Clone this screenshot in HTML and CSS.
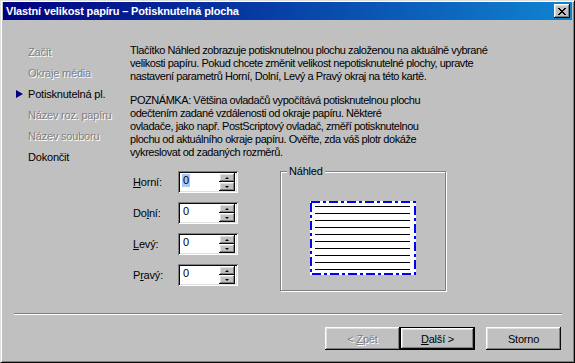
FILE: index.html
```html
<!DOCTYPE html>
<html lang="cs">

<head>
    <meta charset="UTF-8">
    <meta name="viewport" content="width=device-width, initial-scale=1.0">
    <title>Vlastní velikost papíru</title>

    <link rel="stylesheet" href="styles.css">
</head>

<body>
    <div class="window">
        <div class="titlebar">
            <span class="title">Vlastní velikost papíru – Potisknutelná plocha</span>
            <span class="close">
                <svg width="8" height="7" viewBox="0 0 8 7">
                    <path d="M0 0h2v1h1v1h2v-1h1v-1h2v1h-1v1h-1v1h-1v1h1v1h1v1h1v1h-2v-1h-1v-1h-2v1h-1v1h-2v-1h1v-1h1v-1h1v-1h-1v-1h-1v-1h-1z" fill="#000" />
                </svg>
            </span>
        </div>

        <div class="content">
            <ul class="steps">
                <li class="off">Začít</li>
                <li class="off">Okraje média</li>
                <li class="current">Potisknutelná pl.</li>
                <li class="off">Název roz. papíru</li>
                <li class="off">Název souboru</li>
                <li>Dokončit</li>
            </ul>

            <div class="main">
                <p class="intro">Tlačítko Náhled zobrazuje potisknutelnou plochu založenou na aktuálně vybrané<br>
                    velikosti papíru. Pokud chcete změnit velikost nepotisknutelné plochy, upravte<br>
                    nastavení parametrů Horní, Dolní, Levý a Pravý okraj na této kartě.</p>
                <p class="note">POZNÁMKA: Většina ovladačů vypočítává potisknutelnou plochu<br>
                    odečtením zadané vzdálenosti od okraje papíru. Některé<br>
                    ovladače, jako např. PostScriptový ovladač, změří potisknutelnou<br>
                    plochu od aktuálního okraje papíru. Ověřte, zda váš plotr dokáže<br>
                    vykreslovat od zadaných rozměrů.</p>

                <div class="settings">
                    <div class="margins">
                        <div class="field">
                            <label for="top"><u>H</u>orní:</label>
                            <div class="spin">
                                <span class="value selected" id="top">0</span>
                                <span class="arrows"><span class="up"></span><span class="down"></span></span>
                            </div>
                        </div>
                        <div class="field">
                            <label for="bottom">Do<u>l</u>ní:</label>
                            <div class="spin">
                                <span class="value" id="bottom">0</span>
                                <span class="arrows"><span class="up"></span><span class="down"></span></span>
                            </div>
                        </div>
                        <div class="field">
                            <label for="left"><u>L</u>evý:</label>
                            <div class="spin">
                                <span class="value" id="left">0</span>
                                <span class="arrows"><span class="up"></span><span class="down"></span></span>
                            </div>
                        </div>
                        <div class="field">
                            <label for="right">P<u>r</u>avý:</label>
                            <div class="spin">
                                <span class="value" id="right">0</span>
                                <span class="arrows"><span class="up"></span><span class="down"></span></span>
                            </div>
                        </div>
                    </div>

                    <fieldset class="preview">
                        <legend>Náhled</legend>
                        <svg class="page" width="106" height="74" viewBox="0 0 106 74">
                            <rect x="0" y="0" width="106" height="74" fill="#fff" />
                            <rect x="1" y="1" width="104" height="72" fill="none" stroke="#0000ff" stroke-width="2" stroke-dasharray="9 3 3 3" />
                            <path d="M5 5.5H100M5 12.5H100M5 19.5H100M5 26.5H100M5 33.5H100M5 40.5H100M5 47.5H100M5 54.5H100M5 61.5H100M5 68.5H100" stroke="#000" stroke-width="1" />
                        </svg>
                    </fieldset>
                </div>
            </div>
        </div>

        <div class="separator"></div>

        <div class="buttons">
            <button class="btn" disabled>&lt; <u>Z</u>pět</button>
            <button class="btn default"><u>D</u>alší &gt;</button>
            <button class="btn cancel">Storno</button>
        </div>
    </div>
</body>

</html>
```

FILE: styles.css
```css
* {
    margin: 0;
    padding: 0;
    box-sizing: border-box;
}

body {
    font-family: "Liberation Sans", Arial, sans-serif;
    font-size: 11px;
    letter-spacing: -0.2px;
    color: #000;
    background: #c0c0c0;
}

.window {
    width: 575px;
    height: 363px;
    display: flex;
    flex-direction: column;
    background: #c0c0c0;
    border: 1px solid;
    border-color: #dfdfdf #0a0a0a #0a0a0a #dfdfdf;
    box-shadow: inset 1px 1px #fff, inset -1px -1px #808080;
    padding: 1px 2px 2px 2px;
}

.titlebar {
    height: 18px;
    display: flex;
    align-items: center;
    justify-content: space-between;
    padding: 0 2px 0 3px;
    background: linear-gradient(90deg, #000080, #1084d0);
}

.title {
    color: #fff;
    font-weight: bold;
    font-size: 11px;
    letter-spacing: -0.15px;
}

.close {
    width: 16px;
    height: 14px;
    display: flex;
    align-items: center;
    justify-content: center;
    background: #c0c0c0;
    box-shadow: inset -1px -1px #0a0a0a, inset 1px 1px #fff, inset -2px -2px #808080, inset 2px 2px #dfdfdf;
}

.content {
    flex: 1;
    display: flex;
    padding-top: 20px;
}

.steps {
    list-style: none;
    width: 127px;
    padding-top: 1px;
}

.steps li {
    display: flex;
    align-items: center;
    height: 21px;
    padding-left: 25px;
}

.steps li.off {
    color: #808080;
    text-shadow: 1px 1px #fff;
}

.steps li.current::before {
    content: "";
    border-left: 7px solid #000080;
    border-top: 4px solid transparent;
    border-bottom: 4px solid transparent;
    margin-left: -12px;
    margin-right: 5px;
}

.main {
    flex: 1;
    padding-top: 4px;
}

.main p {
    line-height: 13px;
    letter-spacing: -0.45px;
}

.note {
    margin-top: 11px;
}

.settings {
    display: flex;
    align-items: flex-start;
    margin-top: 12px;
    padding-left: 3px;
}

.margins {
    display: flex;
    flex-direction: column;
    gap: 9px;
}

.field {
    display: flex;
    align-items: center;
}

.field label {
    width: 45px;
}

.spin {
    width: 60px;
    height: 22px;
    display: flex;
    align-items: center;
    justify-content: space-between;
    padding: 2px;
    background: #fff;
    box-shadow: inset 1px 1px #808080, inset -1px -1px #fff, inset 2px 2px #0a0a0a, inset -2px -2px #dfdfdf;
}

.value {
    margin-left: 2px;
    line-height: 13px;
    padding: 0 1px;
    align-self: flex-start;
    margin-top: 1px;
}

.value.selected {
    background: #a6caf0;
}

.arrows {
    display: flex;
    flex-direction: column;
    width: 16px;
    height: 18px;
    margin-right: 1px;
}

.arrows span {
    flex: 1;
    display: flex;
    align-items: center;
    justify-content: center;
    background: #c0c0c0;
    box-shadow: inset -1px -1px #0a0a0a, inset 1px 1px #fff, inset -2px -2px #808080, inset 2px 2px #dfdfdf;
}

.arrows .up::before {
    content: "";
    border-bottom: 2px solid #000;
    border-left: 2px solid transparent;
    border-right: 2px solid transparent;
}

.arrows .down::before {
    content: "";
    border-top: 2px solid #000;
    border-left: 2px solid transparent;
    border-right: 2px solid transparent;
}

.preview {
    width: 166px;
    height: 126px;
    margin-left: 42px;
    margin-top: -6px;
    border: 1px solid #808080;
    box-shadow: 1px 1px 0 #fff, inset 1px 1px 0 #fff;
    padding: 0;
}

.preview legend {
    margin-left: 6px;
    padding: 0 2px;
    line-height: 13px;
    background: #c0c0c0;
}

.page {
    display: block;
    margin: 23px auto 0;
}

.separator {
    height: 2px;
    margin: 0 10px 12px 11px;
    border-top: 1px solid #808080;
    border-bottom: 1px solid #fff;
}

.buttons {
    display: flex;
    justify-content: flex-end;
    padding: 0 11px 10px 0;
}

.btn {
    width: 75px;
    height: 23px;
    font-family: inherit;
    font-size: 11px;
    letter-spacing: inherit;
    color: #000;
    background: #c0c0c0;
    border: none;
    outline: none;
    box-shadow: inset -1px -1px #0a0a0a, inset 1px 1px #fff, inset -2px -2px #808080, inset 2px 2px #dfdfdf;
}

.btn:disabled {
    color: #808080;
    text-shadow: 1px 1px #fff;
}

.btn.default {
    border: 1px solid #000;
}

.btn.cancel {
    margin-left: 11px;
}
```
